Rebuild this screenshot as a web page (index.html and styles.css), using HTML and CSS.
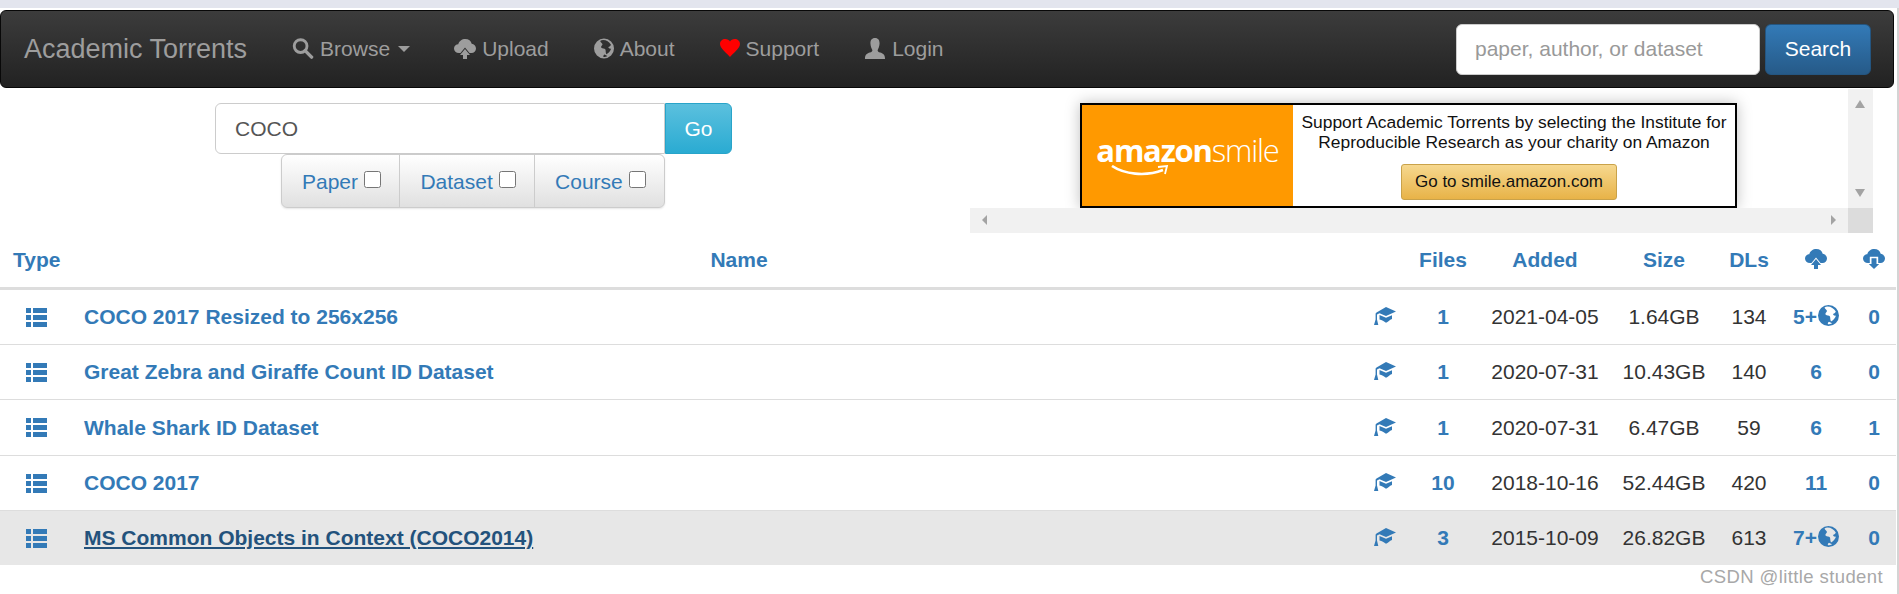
FILE: index.html
```html
<!DOCTYPE html>
<html lang="en">
<head>
    <meta charset="UTF-8">
    <title>Academic Torrents</title>
    <link rel="stylesheet" href="styles.css">
</head>
<body>
    <svg class="icon-defs" aria-hidden="true">
        <symbol id="i-search" viewBox="0 0 22 22"><circle cx="8.5" cy="8.5" r="6.7" fill="none" stroke="currentColor" stroke-width="3"/><path d="M13.2 13.2l6.8 6.8" fill="none" stroke="currentColor" stroke-width="3.6" stroke-linecap="round"/></symbol>
        <symbol id="i-up" viewBox="0 0 22 21"><path d="M5 15C2 15 0 13 0 10.5 0 8 2 6.3 4.3 6.3 5 3 8 1 11.3 1 14.7 1 17 3 17.7 5.8 20 6 22 8 22 10.5 22 13 20 15 17.5 15H15.5L11 9.5 6.5 15Z"/><path d="M11 11L16 17H13V21H9V17H6Z"/></symbol>
        <symbol id="i-down" viewBox="0 0 22 21"><path d="M5 15C2 15 0 13 0 10.5 0 8 2 6.3 4.3 6.3 5 3 8 1 11.3 1 14.7 1 17 3 17.7 5.8 20 6 22 8 22 10.5 22 13 20 15 17.5 15H15.2V8.8H6.8V15Z"/><path d="M8.5 10.3H13.5V16H16.2L11 21 5.8 16H8.5Z"/></symbol>
        <symbol id="i-globe" viewBox="0 0 21 21"><path fill-rule="evenodd" d="M10.5 0A10.5 10.5 0 1 1 10.5 21 10.5 10.5 0 1 1 10.5 0ZM6.5 2.5C7 4 8.5 4.5 9 6 8.5 7.5 7 8 7.5 9.5 9 11 11 10 12 11.5 12.5 13 12 14.5 13 16.5 15 15.5 17.5 13 18 10.5 16.5 11 15.5 10.5 15 9 16.5 8.5 17.5 7.5 17.8 6.5 16 3.5 13 1.5 9.5 1.5 8.5 1.6 7.3 2 6.5 2.5ZM11 16.8C10 17.5 9.5 18.5 10 19.3 11.5 19.3 13 19 14 18.3 13 18 12 17.3 11 16.8Z"/></symbol>
        <symbol id="i-heart" viewBox="0 0 21 22" preserveAspectRatio="none"><path d="M10.5 22C8 17.500 0 12 0 6 0 2.500 2.500 0 5.500 0 7.800 0 9.600 1.300 10.500 3.200 11.400 1.300 13.200 0 15.500 0 18.500 0 21 2.500 21 6 21 12 13 17.500 10.500 22Z"/></symbol>
        <symbol id="i-user" viewBox="0 0 21 22"><path d="M10.500 0C14 0 15.300 2.500 15.300 5.500 15.300 8.500 14 11 13.300 12.500 13 13.800 14 14.600 16 15.300 18.500 16.200 21 17.200 21 22H0C0 17.200 2.500 16.200 5 15.300 7 14.600 8 13.800 7.700 12.500 7 11 5.700 8.500 5.700 5.500 5.700 2.500 7 0 10.500 0Z"/></symbol>
        <symbol id="i-list" viewBox="0 0 21 19"><path d="M0 0H5V5H0ZM7 0H21V5H7ZM0 7H5V12H0ZM7 7H21V12H7ZM0 14H5V19H0ZM7 14H21V19H7Z"/></symbol>
        <symbol id="i-cap" viewBox="0 0 23 18"><path d="M13 0L23 4.500 13 9 6.500 6.300 4 7.500V12.500L5.300 18H1L2.600 12.500V6.500L3.500 5.500Z"/><path d="M6.500 8L13 10.700 19 8.200V12C16.500 13 15 14.800 13 15.800 11 14.500 9 13 6.500 12.500Z"/></symbol>
    </svg>

    <div class="page-edge"></div>
    <div class="top-strip"></div>

    <!-- navbar -->
    <nav class="navbar">
        <a class="brand">Academic Torrents</a>
        <a class="nav-link"><svg class="nav-icon nav-icon-wide"><use href="#i-search"/></svg>Browse<span class="caret"></span></a>
        <a class="nav-link"><svg class="nav-icon nav-icon-wide"><use href="#i-up"/></svg>Upload</a>
        <a class="nav-link"><svg class="nav-icon"><use href="#i-globe"/></svg>About</a>
        <a class="nav-link"><svg class="nav-icon heart"><use href="#i-heart"/></svg>Support</a>
        <a class="nav-link"><svg class="nav-icon nav-icon-wide"><use href="#i-user"/></svg>Login</a>
        <form class="nav-search">
            <input class="nav-input" type="text" placeholder="paper, author, or dataset">
            <button class="btn-search" type="button">Search</button>
        </form>
    </nav>

    <div class="top-row">
        <!-- search form -->
        <div class="search-pane">
            <div class="search-line">
                <input class="search-input" type="text" value="COCO">
                <button class="btn-go" type="button">Go</button>
            </div>
            <div class="filter-group">
                <label class="filter">Paper <input type="checkbox"></label>
                <label class="filter">Dataset <input type="checkbox"></label>
                <label class="filter">Course <input type="checkbox"></label>
            </div>
        </div>

        <!-- banner in its scroll box -->
        <div class="scroll-box">
            <div class="scroll-view">
                <div class="banner">
                    <div class="banner-logo">
                        <div class="logo-text"><b>amazon</b>smile</div>
                        <svg class="logo-smile" viewBox="0 0 60 12"><path d="M1 1C13 9 34 12 52 5" fill="none" stroke="#fff" stroke-width="2.600"/><path d="M47 2L56 1 54 9" fill="none" stroke="#fff" stroke-width="1.800"/></svg>
                    </div>
                    <div class="banner-body">
                        <p class="banner-text">Support Academic Torrents by selecting the Institute for<br>Reproducible Research as your charity on Amazon</p>
                        <div class="banner-btn">Go to smile.amazon.com</div>
                    </div>
                </div>
            </div>
            <div class="bar-v"><span class="arrow arrow-up"></span><span class="arrow arrow-down"></span></div>
            <div class="bar-h"><span class="arrow arrow-left"></span><span class="arrow arrow-right"></span></div>
            <div class="bar-corner"></div>
        </div>
    </div>

    <!-- results -->
    <table class="results">
        <colgroup>
            <col class="col-type"><col><col class="col-files"><col class="col-added"><col class="col-size"><col class="col-dls"><col class="col-up"><col class="col-down">
        </colgroup>
        <thead>
            <tr>
                <th class="th-type"><a>Type</a></th>
                <th><a>Name</a></th>
                <th><a>Files</a></th>
                <th><a>Added</a></th>
                <th><a>Size</a></th>
                <th><a>DLs</a></th>
                <th><svg class="head-icon"><use href="#i-up"/></svg></th>
                <th><svg class="head-icon"><use href="#i-down"/></svg></th>
            </tr>
        </thead>
        <tbody>
            <tr>
                <td><svg class="list-icon"><use href="#i-list"/></svg></td>
                <td class="name"><a>COCO 2017 Resized to 256x256</a><svg class="cap-icon"><use href="#i-cap"/></svg></td>
                <td class="num">1</td><td>2021-04-05</td><td>1.64GB</td><td>134</td>
                <td class="num">5+<svg class="globe-icon"><use href="#i-globe"/></svg></td><td class="num">0</td>
            </tr>
            <tr>
                <td><svg class="list-icon"><use href="#i-list"/></svg></td>
                <td class="name"><a>Great Zebra and Giraffe Count ID Dataset</a><svg class="cap-icon"><use href="#i-cap"/></svg></td>
                <td class="num">1</td><td>2020-07-31</td><td>10.43GB</td><td>140</td>
                <td class="num">6</td><td class="num">0</td>
            </tr>
            <tr class="row-tall">
                <td><svg class="list-icon"><use href="#i-list"/></svg></td>
                <td class="name"><a>Whale Shark ID Dataset</a><svg class="cap-icon"><use href="#i-cap"/></svg></td>
                <td class="num">1</td><td>2020-07-31</td><td>6.47GB</td><td>59</td>
                <td class="num">6</td><td class="num">1</td>
            </tr>
            <tr>
                <td><svg class="list-icon"><use href="#i-list"/></svg></td>
                <td class="name"><a>COCO 2017</a><svg class="cap-icon"><use href="#i-cap"/></svg></td>
                <td class="num">10</td><td>2018-10-16</td><td>52.44GB</td><td>420</td>
                <td class="num">11</td><td class="num">0</td>
            </tr>
            <tr class="hovered">
                <td><svg class="list-icon"><use href="#i-list"/></svg></td>
                <td class="name"><a>MS Common Objects in Context (COCO2014)</a><svg class="cap-icon"><use href="#i-cap"/></svg></td>
                <td class="num">3</td><td>2015-10-09</td><td>26.82GB</td><td>613</td>
                <td class="num">7+<svg class="globe-icon"><use href="#i-globe"/></svg></td><td class="num">0</td>
            </tr>
        </tbody>
    </table>

    <div class="watermark">CSDN @little student</div>
</body>
</html>
```

FILE: styles.css
```css
/* page */
html, body {
    margin: 0;
    padding: 0;
    height: 594px;
    overflow: hidden;
    background-color: #fff;
    color: #333;
    font-family: "Liberation Sans", Arial, sans-serif;
    font-size: 21px;
}

.icon-defs {
    position: absolute;
    width: 0;
    height: 0;
}

.page-edge {
    position: absolute;
    top: 8px;
    right: 0;
    width: 2px;
    height: 586px;
    background-color: #d4d4d4;
}

.top-strip {
    height: 8px;
    margin-bottom: 2px;
    background-color: #e3e5ee;
}

/* navbar */
.navbar {
    display: flex;
    align-items: center;
    box-sizing: border-box;
    width: 1894px;
    height: 78px;
    border: 1px solid #080808;
    border-radius: 6px;
    background: linear-gradient(to bottom, #3c3c3c, #222);
    color: #9d9d9d;
}

.brand {
    padding: 0 22.5px 0 23px;
    font-size: 27px;
}

.nav-link {
    display: flex;
    align-items: center;
    padding: 0 22.5px;
}

.nav-icon {
    width: 20px;
    height: 21px;
    margin-right: 6px;
    fill: currentColor;
    color: #9d9d9d;
    position: relative;
    top: -1px;
}

.nav-icon-wide {
    width: 22px;
}

.heart {
    height: 18px;
    color: #f00;
}

.caret {
    width: 0;
    height: 0;
    margin-left: 8px;
    margin-right: -1px;
    border-top: 6px solid #9d9d9d;
    border-left: 6px solid transparent;
    border-right: 6px solid transparent;
}

.nav-search {
    display: flex;
    gap: 5px;
    margin-left: auto;
    margin-right: 22px;
}

.nav-input {
    box-sizing: border-box;
    width: 304px;
    height: 51px;
    padding: 0 18px;
    border: 1px solid #ccc;
    border-radius: 6px;
    font: 21px "Liberation Sans", Arial, sans-serif;
}

.nav-input::placeholder {
    color: #999;
}

.btn-search {
    width: 106px;
    height: 51px;
    border: 1px solid #245580;
    border-radius: 6px;
    background: linear-gradient(to bottom, #337ab7, #265a88);
    color: #fff;
    font: 21px "Liberation Sans", Arial, sans-serif;
}

/* search + banner row */
.top-row {
    display: flex;
    height: 144px;
    margin-top: 1px;
}

.search-pane {
    box-sizing: border-box;
    width: 970px;
    padding: 14px 0 0 215px;
}

.search-line {
    display: flex;
}

.search-input {
    box-sizing: border-box;
    width: 450px;
    height: 51px;
    padding: 0 19px;
    border: 1px solid #ccc;
    border-radius: 6px 0 0 6px;
    color: #555;
    font: 21px "Liberation Sans", Arial, sans-serif;
}

.btn-go {
    width: 67px;
    height: 51px;
    border: 1px solid #28a4c9;
    border-radius: 0 6px 6px 0;
    background: linear-gradient(to bottom, #5bc0de, #2aabd2);
    color: #fff;
    font: 21px "Liberation Sans", Arial, sans-serif;
}

.filter-group {
    display: inline-flex;
    margin-left: 66px;
    border: 1px solid #ccc;
    border-radius: 6px;
    background: linear-gradient(to bottom, #fff, #e0e0e0);
    box-shadow: 0 1px 2px rgba(0, 0, 0, 0.1);
}

.filter {
    display: flex;
    align-items: center;
    height: 52px;
    box-sizing: border-box;
    padding: 2px 18.5px 0 20px;
    border-right: 1px solid #ccc;
    color: #337ab7;
    white-space: pre;
}

.filter:last-child {
    border-right: none;
}

.filter input {
    width: 17px;
    height: 17px;
    margin: -6px 0 0 0;
}

/* banner */
.scroll-box {
    display: grid;
    grid-template-columns: 878px 25px;
    grid-template-rows: 119px 25px;
}

.scroll-view {
    overflow: hidden;
    padding: 14px 0 0 110px;
    box-sizing: border-box;
}

.banner {
    display: flex;
    box-sizing: border-box;
    width: 657px;
    height: 105px;
    border: 2px solid #000;
    background-color: #fff;
    box-shadow: 0 0 14px rgba(0, 0, 0, 0.25);
}

.banner-logo {
    width: 211px;
    flex-shrink: 0;
    background-color: #f90;
    color: #fff;
    text-align: center;
}

.logo-text {
    margin-top: 26px;
    font-family: "Open Sans", sans-serif;
    font-size: 31px;
    font-weight: 300;
    letter-spacing: -1.2px;
    line-height: 38px;
}

.logo-text b {
    font-weight: 700;
}

.logo-smile {
    display: block;
    width: 60px;
    height: 12px;
    margin: -4px 0 0 29px;
}

.banner-body {
    flex: 1;
    text-align: center;
    color: #111;
}

.banner-text {
    margin: 7px 0 0;
    font-size: 17.4px;
    line-height: 20px;
}

.banner-btn {
    box-sizing: border-box;
    width: 216px;
    height: 36px;
    margin: 12px 0 0 108px;
    border: 1px solid #c9a24a;
    border-radius: 3px;
    background: linear-gradient(to bottom, #f6d88f, #e8b348);
    font-size: 17px;
    line-height: 34px;
}

/* fake scrollbars */
.bar-v, .bar-h {
    position: relative;
    background-color: #f1f1f1;
}

.bar-corner {
    background-color: #dcdcdc;
}

.arrow {
    position: absolute;
    width: 0;
    height: 0;
    border: 5px solid transparent;
}

.arrow-up {
    top: 6px;
    left: 7px;
    border-bottom: 8px solid #a3a3a3;
}

.arrow-down {
    bottom: 6px;
    left: 7px;
    border-top: 8px solid #a3a3a3;
}

.arrow-left {
    top: 7px;
    left: 7px;
    border-right: 5px solid #a3a3a3;
}

.arrow-right {
    top: 7px;
    right: 7px;
    border-left: 5px solid #a3a3a3;
}

/* results table */
.results {
    table-layout: fixed;
    width: 1896px;
    border-collapse: collapse;
    text-align: center;
}

.col-type { width: 72px; }
.col-files { width: 74px; }
.col-added { width: 130px; }
.col-size { width: 108px; }
.col-dls { width: 62px; }
.col-up { width: 72px; }
.col-down { width: 44px; }

.results th {
    height: 54px;
    padding: 0;
    border-bottom: 3px solid #ddd;
    color: #337ab7;
    font-weight: bold;
}

.results .th-type {
    text-align: left;
    padding-left: 13px;
}

.results td {
    height: 54px;
    padding: 0;
    border-top: 1px solid #ddd;
}

.results .row-tall td {
    height: 55px;
}

.results tbody tr:first-child td {
    border-top: none;
}

.results .name {
    text-align: left;
    padding: 0 10px 0 12px;
    color: #337ab7;
    font-weight: bold;
}

.results .num {
    color: #337ab7;
    font-weight: bold;
}

.hovered {
    background-color: #e7e7e7;
}

.hovered .name a {
    color: #23527c;
    text-decoration: underline;
}

.head-icon {
    width: 22px;
    height: 21px;
    fill: #337ab7;
    vertical-align: -1px;
}

.list-icon {
    width: 21px;
    height: 19px;
    fill: #337ab7;
    vertical-align: middle;
    position: relative;
    top: -1px;
}

.cap-icon {
    float: right;
    width: 23px;
    height: 18px;
    margin-top: 2px;
    fill: #337ab7;
}

.globe-icon {
    width: 21px;
    height: 21px;
    margin-left: 1px;
    fill: #337ab7;
    vertical-align: -2px;
}

.watermark {
    position: absolute;
    right: 16px;
    top: 566px;
    color: #a8a8a8;
    font-size: 18.5px;
    letter-spacing: 0.4px;
}
```
